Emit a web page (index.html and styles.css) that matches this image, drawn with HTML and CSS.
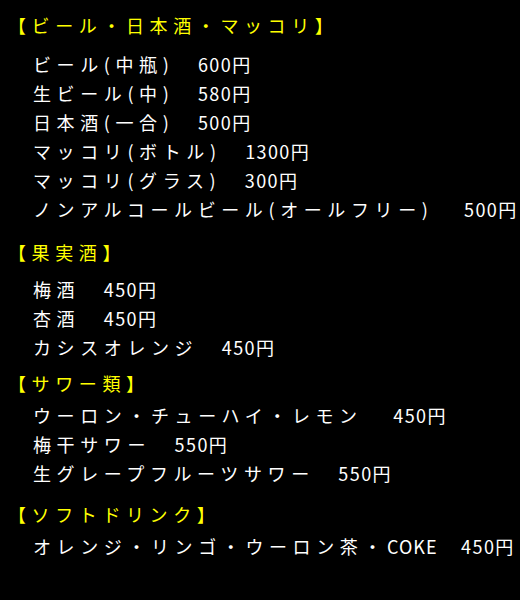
FILE: index.html
```html
<!DOCTYPE html>
<html lang="ja">
<head>
    <meta charset="UTF-8">
    <meta name="viewport" content="width=device-width, initial-scale=1.0">
    <title>ドリンクメニュー</title>
    <link rel="stylesheet" href="styles.css">
</head>
<body>

    <div class="menu">
        <section class="menu-section section-beer">
            <h2 class="menu-title">【ビール・日本酒・マッコリ】</h2>
            <ul class="menu-list">
                <li>ビール(中瓶)　<span class="price">600円</span></li>
                <li>生ビール(中)　<span class="price">580円</span></li>
                <li>日本酒(一合)　<span class="price">500円</span></li>
                <li>マッコリ(ボトル)　<span class="price">1300円</span></li>
                <li>マッコリ(グラス)　<span class="price">300円</span></li>
                <li>ノンアルコールビール(オールフリー)　<span class="price price-wide">500円</span></li>
            </ul>
        </section>

        <section class="menu-section section-fruit">
            <h2 class="menu-title">【果実酒】</h2>
            <ul class="menu-list">
                <li>梅酒　<span class="price">450円</span></li>
                <li>杏酒　<span class="price">450円</span></li>
                <li>カシスオレンジ　<span class="price">450円</span></li>
            </ul>
        </section>

        <section class="menu-section section-sour">
            <h2 class="menu-title">【サワー類】</h2>
            <ul class="menu-list">
                <li>ウーロン・チューハイ・レモン　<span class="price price-wide">450円</span></li>
                <li>梅干サワー　<span class="price">550円</span></li>
                <li>生グレープフルーツサワー　<span class="price">550円</span></li>
            </ul>
        </section>

        <section class="menu-section section-soft">
            <h2 class="menu-title">【ソフトドリンク】</h2>
            <ul class="menu-list">
                <li>オレンジ・リンゴ・ウーロン茶・<span class="latin">COKE</span>　<span class="price">450円</span></li>
            </ul>
        </section>
    </div>

</body>
</html>
```

FILE: styles.css
```css
* {
    margin: 0;
    padding: 0;
    box-sizing: border-box;
    font-family: 'Noto Sans CJK JP', 'Noto Sans', sans-serif;
}

body {
    background-color: #000;
    color: #fff;
    width: 520px;
    height: 600px;
    overflow: hidden;
}

.menu {
    padding: 11px 0 0 8px;
}

.menu-title {
    color: #ffff00;
    font-size: 18px;
    font-weight: 400;
    line-height: 29px;
    letter-spacing: 5.6px;
    white-space: nowrap;
}

.menu-list {
    list-style: none;
    padding-left: 25px;
}

.menu-list li {
    font-size: 18px;
    line-height: 29px;
    letter-spacing: 5.6px;
    white-space: nowrap;
}

.price {
    letter-spacing: 1.4px;
}

.price-wide {
    margin-left: 7px;
}

.latin {
    letter-spacing: 1px;
}

/* 見出しと品目の間隔はセクションごとに少し違う */
.section-beer .menu-title {
    margin-bottom: 9.5px;
}

.section-fruit {
    margin-top: 14.5px;
}

.section-fruit .menu-title {
    margin-bottom: 7.5px;
}

.section-sour {
    margin-top: 7px;
}

.section-sour .menu-title {
    margin-bottom: 3px;
}

.section-soft {
    margin-top: 12px;
}

.section-soft .menu-title {
    margin-bottom: 3px;
}
```
